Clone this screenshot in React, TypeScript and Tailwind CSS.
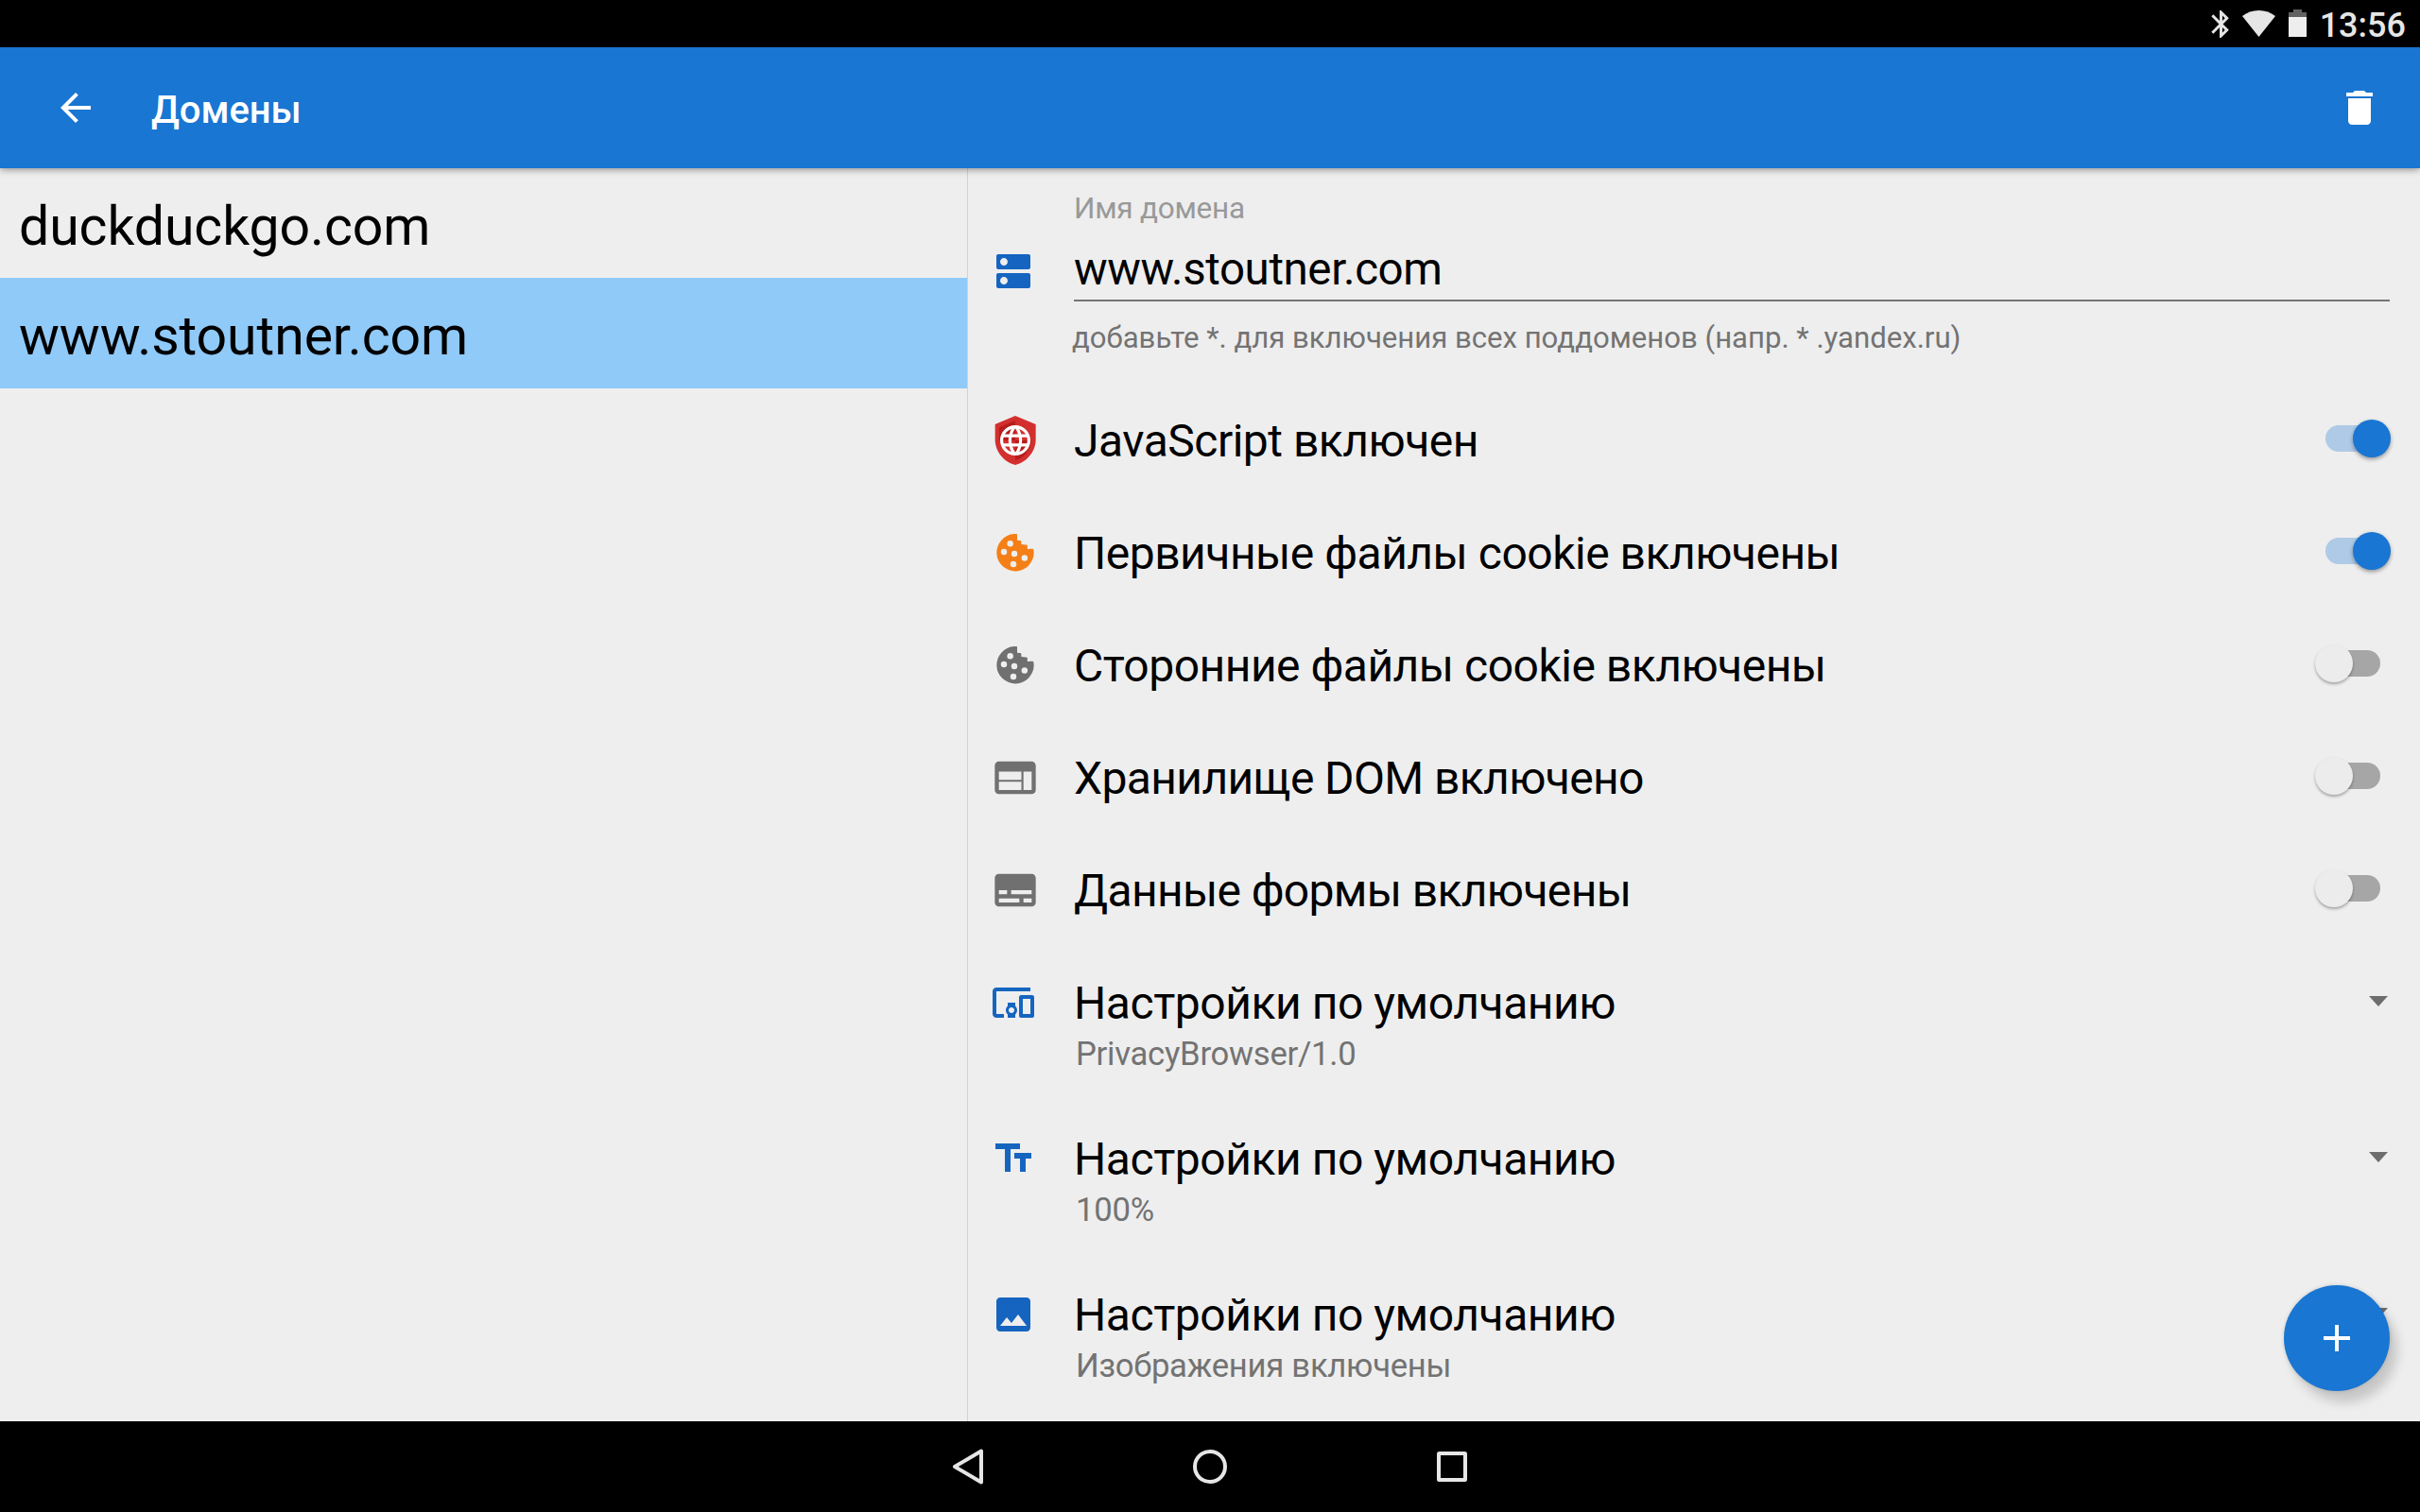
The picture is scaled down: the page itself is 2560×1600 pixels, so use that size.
import React from "react";

const ICONS = {
  dns: "M20 13H4c-.55 0-1 .45-1 1v6c0 .55.45 1 1 1h16c.55 0 1-.45 1-1v-6c0-.55-.45-1-1-1zM7 19c-1.1 0-2-.9-2-2s.9-2 2-2 2 .9 2 2-.9 2-2 2zM20 3H4c-.55 0-1 .45-1 1v6c0 .55.45 1 1 1h16c.55 0 1-.45 1-1V4c0-.55-.45-1-1-1zM7 9c-1.1 0-2-.9-2-2s.9-2 2-2 2 .9 2 2-.9 2-2 2z",
  web: "M20 4H4c-1.1 0-1.99.9-1.99 2L2 18c0 1.1.9 2 2 2h16c1.1 0 2-.9 2-2V6c0-1.1-.9-2-2-2zm-5 14H4v-4h11v4zm0-5H4V9h11v4zm5 5h-4V9h4v9z",
  form: "M20 4H4c-1.1 0-2 .9-2 2v12c0 1.1.9 2 2 2h16c1.1 0 2-.9 2-2V6c0-1.1-.9-2-2-2zM4 12h4v2H4v-2zm10 6H4v-2h10v2zm6 0h-4v-2h4v2zm0-4H10v-2h10v2z",
  devices: "M3 6h18V4H3c-1.1 0-2 .9-2 2v12c0 1.1.9 2 2 2h4v-2H3V6zm10 6H9v1.78c-.61.55-1 1.33-1 2.22s.39 1.67 1 2.22V20h4v-1.78c.61-.55 1-1.34 1-2.22s-.39-1.67-1-2.22V12zm-2 5.5c-.83 0-1.500-.67-1.500-1.500s.67-1.500 1.500-1.500 1.500.67 1.500 1.500-.67 1.500-1.500 1.500zM22 8h-6c-.5 0-1 .5-1 1v10c0 .5.5 1 1 1h6c.5 0 1-.5 1-1V9c0-.5-.5-1-1-1zm-1 10h-4v-8h4v8z",
  size: "M2.500 4v3h5v12h3V7h5V4h-13zm19 5h-9v3h3v7h3v-7h3V9z",
  image: "M21 19V5c0-1.1-.9-2-2-2H5c-1.1 0-2 .9-2 2v14c0 1.1.9 2 2 2h14c1.1 0 2-.9 2-2zM8.500 13.500l2.500 3.010L14.500 12l4.500 6H5l3.500-4.500z",
  back: "M20 11H7.830l5.590-5.590L12 4l-8 8 8 8 1.410-1.410L7.830 13H20v-2z",
  trash: "M6 19c0 1.1.9 2 2 2h8c1.1 0 2-.9 2-2V7H6v12zM19 4h-3.500l-1-1h-5l-1 1H5v2h14V4z",
  globe: "M11.99 2C6.47 2 2 6.48 2 12s4.47 10 9.99 10C17.52 22 22 17.52 22 12S17.52 2 11.99 2zm6.93 6h-2.95c-.32-1.25-.78-2.45-1.38-3.56 1.84.63 3.37 1.91 4.33 3.56zM12 4.04c.83 1.2 1.48 2.53 1.91 3.96h-3.82c.43-1.43 1.08-2.76 1.91-3.96zM4.26 14C4.1 13.36 4 12.69 4 12s.1-1.36.26-2h3.38c-.08.66-.14 1.32-.14 2 0 .68.06 1.34.14 2H4.26zm.82 2h2.95c.32 1.25.78 2.45 1.38 3.56-1.84-.63-3.37-1.9-4.33-3.56zm2.95-8H5.08c.96-1.66 2.49-2.93 4.33-3.56C8.81 5.55 8.35 6.75 8.03 8zM12 19.96c-.83-1.2-1.48-2.53-1.91-3.96h3.82c-.43 1.43-1.08 2.76-1.91 3.96zM14.34 14H9.66c-.09-.66-.16-1.32-.16-2 0-.68.07-1.35.16-2h4.68c.09.65.16 1.32.16 2 0 .68-.07 1.34-.16 2zm.25 5.56c.6-1.11 1.06-2.31 1.38-3.56h2.95c-.96 1.65-2.49 2.93-4.33 3.56zM16.36 14c.08-.66.14-1.32.14-2 0-.68-.06-1.34-.14-2h3.38c.16.64.26 1.31.26 2s-.1 1.36-.26 2h-3.38z",
  bluetooth: "M17.71 7.71L12 2h-1v7.59L6.41 5 5 6.41 10.59 12 5 17.59 6.41 19 11 14.41V22h1l5.71-5.71-4.3-4.29 4.3-4.29zM13 5.83l1.88 1.88L13 9.59V5.83zm1.88 10.46L13 18.17v-3.76l1.88 1.88z",
};

function Icon({ d, className }: { d: string; className: string }) {
  return (
    <svg viewBox="0 0 24 24" className={`shrink-0 fill-current ${className}`}>
      <path d={d} />
    </svg>
  );
}

function Shield() {
  return (
    <svg viewBox="0 0 156 156" className="size-[52px] shrink-0">
      <path fill="#d32f2f" d="M78 0L143 27V76C143 113 115 147 78 156C41 147 14 113 14 76V27Z" />
      <path fill="#b71c1c" d="M78 15V78H27V37ZM78 78H129C127 108 106 133 78 142Z" />
      <g transform="translate(20.4 20.4) scale(4.8)">
        <path fill="#fff" d={ICONS.globe} />
      </g>
    </svg>
  );
}

function Cookie({ className }: { className: string }) {
  return (
    <svg viewBox="0 0 156 156" className={`size-[52px] shrink-0 ${className}`}>
      <path
        className="fill-current"
        d="M84 18.5C81 17.8 78 18 74 18.3A59 59 0 1 0 137 77C137 73 136.5 69 135 66C129 64.5 124 67 118 66C116 65 116.5 61 116.5 54.5C113 51 108 53 98 51C96 49 98 44 96 40C93 38 87 41 84 37Z"
      />
      <g fill="#eee">
        <circle cx="62" cy="49" r="9.7" />
        <circle cx="42" cy="75" r="9.7" />
        <circle cx="75" cy="81" r="9.7" />
        <circle cx="107.5" cy="94.5" r="9.7" />
        <circle cx="72" cy="114" r="9.7" />
      </g>
    </svg>
  );
}

function Switch({ on }: { on: boolean }) {
  return (
    <div className="relative mt-[37px] mr-[31px] flex h-10 w-20 shrink-0 items-center">
      <div className={`ml-[11px] h-7 w-[58px] rounded-full ${on ? "bg-[#aecae6]" : "bg-[#a6a6a6]"}`} />
      <div
        className={`absolute top-0 size-10 rounded-full ${
          on
            ? "right-0 bg-[#1976d2] shadow-[0_2px_4px_rgba(0,0,0,0.38)]"
            : "left-0 bg-[#ececec] shadow-[0_2px_3px_rgba(0,0,0,0.3)]"
        }`}
      />
    </div>
  );
}

const switches = [
  { label: "JavaScript включен", on: true, tracking: "tracking-[-0.5px]", icon: <Shield /> },
  {
    label: "Первичные файлы cookie включены",
    on: true,
    tracking: "tracking-[-0.5px]",
    icon: <Cookie className="text-[#f57f17]" />,
  },
  {
    label: "Сторонние файлы cookie включены",
    on: false,
    tracking: "tracking-[-0.5px]",
    icon: <Cookie className="text-[#707070]" />,
  },
  {
    label: "Хранилище DOM включено",
    on: false,
    tracking: "tracking-[-0.63px]",
    icon: <Icon d={ICONS.web} className="size-[52px] text-[#707070]" />,
  },
  {
    label: "Данные формы включены",
    on: false,
    tracking: "tracking-[-0.65px]",
    icon: <Icon d={ICONS.form} className="size-[52px] text-[#707070]" />,
  },
];

const spinners = [
  { label: "Настройки по умолчанию", value: "PrivacyBrowser/1.0", d: ICONS.devices },
  { label: "Настройки по умолчанию", value: "100%", d: ICONS.size },
  { label: "Настройки по умолчанию", value: "Изображения включены", d: ICONS.image },
];

const domains = [
  { name: "duckduckgo.com", selected: false },
  { name: "www.stoutner.com", selected: true },
];

const navShapes = [
  <path key="back" d="M38 7.5V40.5L10 24Z" />,
  <circle key="home" cx="24" cy="24" r="16" />,
  <rect key="recent" x="10" y="10" width="28" height="28" rx="0.5" />,
];

export default function App() {
  return (
    <div className="flex h-[1600px] w-[2560px] flex-col overflow-hidden bg-[#eee] font-[Roboto,sans-serif] text-black">
      <div className="flex h-[50px] shrink-0 items-start bg-black text-[#e6e6e6]">
        <Icon d={ICONS.bluetooth} className="mt-[7.5px] ml-auto size-[35px]" />
        <svg viewBox="0 0 35 28" className="mt-[11px] ml-[4.7px] h-7 w-[35px] fill-current">
          <path d="M17.5 28L0 6C5 2 11 0 17.5 0S30 2 35 6Z" />
        </svg>
        <svg viewBox="0 0 19 29" className="mt-[10px] ml-[14px] h-[29px] w-[19px]">
          <path fill="#616161" d="M0 3H5V0H14V3H19V8H0Z" />
          <path fill="#eee" d="M0 8H19V29H0Z" />
        </svg>
        <span className="mt-1.5 mr-[15px] ml-[14px] text-[36px] leading-[42px] font-medium">13:56</span>
      </div>

      <header className="relative z-10 flex h-32 shrink-0 items-start bg-[#1976d2] text-white shadow-[0_1px_8px_rgba(0,0,0,0.45)]">
        <Icon d={ICONS.back} className="mt-10 ml-14 size-12" />
        <h1 className="mt-[43px] ml-14 text-[40px] leading-[47px] font-medium tracking-[-0.1px]">Домены</h1>
        <Icon d={ICONS.trash} className="mt-10 mr-10 ml-auto size-12" />
      </header>

      <main className="relative flex h-[1326px] shrink-0 overflow-hidden">
        <nav className="w-[1024px] shrink-0 border-r border-[#d2d2d2]">
          {domains.map((domain) => (
            <div
              key={domain.name}
              className={`pt-7 pl-5 text-[57.2px] leading-[67px] tracking-[-0.1px] ${
                domain.selected ? "h-[117px] bg-[#90caf9]" : "h-[116px]"
              }`}
            >
              {domain.name}
            </div>
          ))}
        </nav>

        <section className="flex-1 pl-6">
          <div className="flex h-[229px]">
            <Icon d={ICONS.dns} className="mt-[85px] mr-10 size-12 text-[#1565c0]" />
            <div className="mr-8 flex-1 pt-6">
              <div className="text-[31.5px] leading-[37px] tracking-[-0.25px] text-[#999]">Имя домена</div>
              <div className="mt-[18px] border-b-2 border-[#747474] pb-1 text-[47.5px] leading-[56px] tracking-[-0.4px]">
                www.stoutner.com
              </div>
              <div className="mt-[21px] -ml-0.5 text-[31.1px] leading-[36px] text-[#737373]">
                добавьте *. для включения всех поддоменов (напр. * .yandex.ru)
              </div>
            </div>
          </div>

          {switches.map((row) => (
            <div key={row.label} className="flex h-[119px] items-start">
              <div className="mt-[33px] w-[88px] shrink-0">{row.icon}</div>
              <div className={`flex-1 pt-[31px] text-[48px] leading-[57px] ${row.tracking}`}>{row.label}</div>
              <Switch on={row.on} />
            </div>
          ))}

          {spinners.map((row) => (
            <div key={row.value} className="flex h-[165px] items-start">
              <Icon d={row.d} className="mt-[35px] mr-10 size-12 text-[#1565c0]" />
              <div className="flex-1 pt-[31px]">
                <div className="text-[48px] leading-[57px] tracking-[-0.45px]">{row.label}</div>
                <div className="mt-[5px] ml-0.5 text-[34.7px] leading-[40px] tracking-[-0.28px] text-[#737373]">
                  {row.value}
                </div>
              </div>
              <svg viewBox="0 0 20 11" className="mt-[52px] mr-[34px] h-[11px] w-5 fill-[#6d6d6d]">
                <path d="M0 0H20L10 11Z" />
              </svg>
            </div>
          ))}
        </section>

        <button className="absolute right-8 bottom-8 flex size-28 items-center justify-center rounded-full bg-[#1976d2] shadow-[8px_12px_12px_rgba(0,0,0,0.17),0_0_4px_rgba(0,0,0,0.15)]">
          <svg viewBox="0 0 28 28" className="size-7 fill-white">
            <path d="M12 0H16V12H28V16H16V28H12V16H0V12H12Z" />
          </svg>
        </button>
      </main>

      <footer className="flex h-24 shrink-0 items-center justify-center bg-black">
        {navShapes.map((shape) => (
          <div key={shape.key} className="flex w-64 justify-center">
            <svg viewBox="0 0 48 48" className="size-12 fill-none stroke-[#e6e6e6] stroke-4 [stroke-linejoin:round]">
              {shape}
            </svg>
          </div>
        ))}
      </footer>
    </div>
  );
}
